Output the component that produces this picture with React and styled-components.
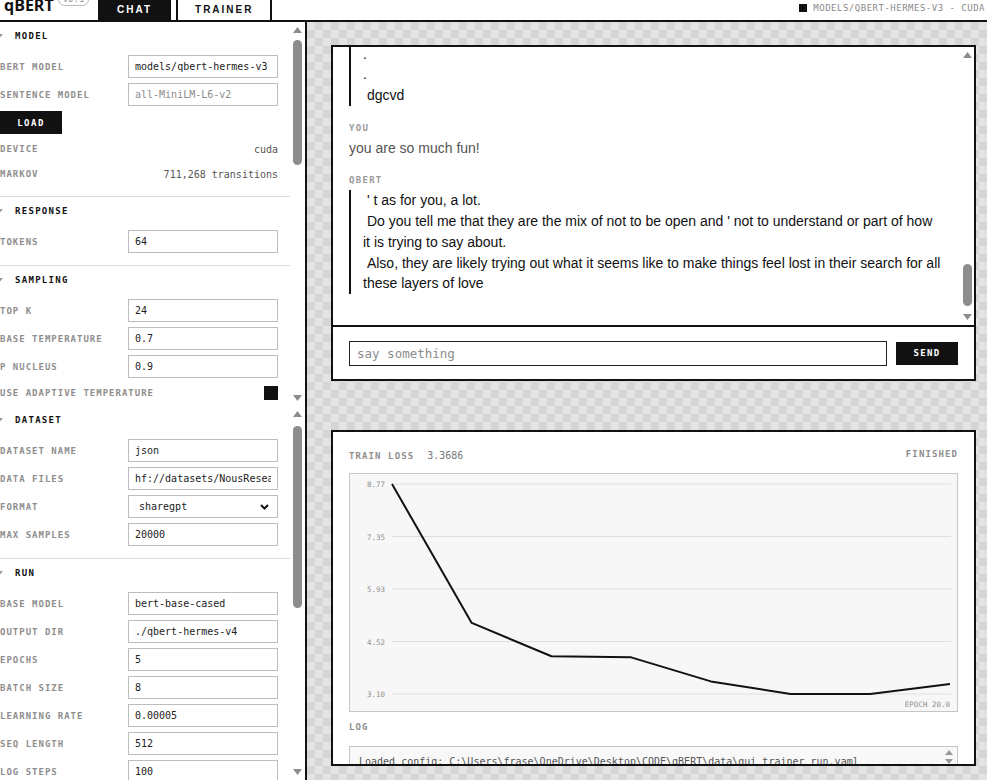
import React from "react"
import styled, { createGlobalStyle } from "styled-components"

const MONO = `"DejaVu Sans Mono", "Liberation Mono", monospace`

const GlobalStyle = createGlobalStyle`
  html, body {
    margin: 0;
    padding: 0;
    overflow: hidden;
    background: #fff;
    font-family: "Liberation Sans", Arial, sans-serif;
  }
  * { box-sizing: border-box; }
`

const modelRows = [
  { label: "BERT MODEL", value: "models/qbert-hermes-v3" },
  { label: "SENTENCE MODEL", placeholder: "all-MiniLM-L6-v2" },
]
const samplingRows = [
  { label: "TOP K", value: "24" },
  { label: "BASE TEMPERATURE", value: "0.7" },
  { label: "P NUCLEUS", value: "0.9" },
]
const datasetRows = [
  { label: "DATASET NAME", value: "json" },
  { label: "DATA FILES", value: "hf://datasets/NousResearch/hermes-function-calling-v1" },
  { label: "FORMAT", value: "sharegpt", select: true },
  { label: "MAX SAMPLES", value: "20000" },
]
const runRows = [
  { label: "BASE MODEL", value: "bert-base-cased" },
  { label: "OUTPUT DIR", value: "./qbert-hermes-v4" },
  { label: "EPOCHS", value: "5" },
  { label: "BATCH SIZE", value: "8" },
  { label: "LEARNING RATE", value: "0.00005" },
  { label: "SEQ LENGTH", value: "512" },
  { label: "LOG STEPS", value: "100" },
]

const losses = [8.77, 5.02, 4.12, 4.09, 3.44, 3.1, 3.1, 3.3686]

const messages = [
  { who: "YOU", text: "hey qbert" },
  { who: "QBERT", text: "hello there.\n.\n.\n.\n dgcvd" },
  { who: "YOU", text: "you are so much fun!" },
  {
    who: "QBERT",
    text:
      " ' t as for you, a lot.\n Do you tell me that they are the mix of not to be open and ' not to understand or part of how it is trying to say about.\n Also, they are likely trying out what it seems like to make things feel lost in their search for all these layers of love",
  },
]

const Field = ({ row }) => (
  <Row>
    <Label>{row.label}</Label>
    {row.select ? (
      <FakeSelect>
        <span>{row.value}</span>
        <svg width="9" height="6" viewBox="0 0 9 6">
          <path d="M1 1l3.5 3.5L8 1" fill="none" stroke="#111" strokeWidth="2" />
        </svg>
      </FakeSelect>
    ) : (
      <Input defaultValue={row.value} placeholder={row.placeholder} />
    )}
  </Row>
)

const Section = ({ title, children, last }) => (
  <SectionBox last={last}>
    <SectionHead>
      <Caret>
        <svg width="7" height="4" viewBox="0 0 7 4">
          <polygon points="0,0 7,0 3.5,4" fill="#9a9a9a" />
        </svg>
      </Caret>
      <span>{title}</span>
    </SectionHead>
    <Rows>{children}</Rows>
  </SectionBox>
)

const ScrollBar = ({ thumbTop, thumbHeight, width = 15 }) => (
  <Rail w={width}>
    <ArrowBox>
      <svg width="9" height="6" viewBox="0 0 9 6">
        <polygon points="4.5,0 9,6 0,6" fill="#8c8c8c" />
      </svg>
    </ArrowBox>
    <Track>
      <Thumb style={{ marginTop: thumbTop, height: thumbHeight }} />
    </Track>
    <ArrowBox>
      <svg width="9" height="6" viewBox="0 0 9 6">
        <polygon points="0,0 9,0 4.5,6" fill="#8c8c8c" />
      </svg>
    </ArrowBox>
  </Rail>
)

const LossChart = () => {
  const top = 10
  const bottom = 220
  const max = 8.77
  const min = 3.1
  const y = (v) => top + ((max - v) * (bottom - top)) / (max - min)
  const x = (i) => 42 + (i * (600 - 42)) / (losses.length - 1)
  const ticks = [0, 1, 2, 3, 4].map((i) => max - (i * (max - min)) / 4)
  return (
    <svg width="607" height="237" viewBox="0 0 607 237">
      {ticks.map((t) => (
        <g key={t}>
          <line x1="42" x2="601" y1={y(t)} y2={y(t)} stroke="#dedede" strokeWidth="1" />
          <text x="35" y={y(t) + 3} textAnchor="end" fontSize="7.5" fill="#8f8f8f" fontFamily={MONO}>
            {t.toFixed(2)}
          </text>
        </g>
      ))}
      <polyline
        points={losses.map((v, i) => `${x(i)},${y(v)}`).join(" ")}
        fill="none"
        stroke="#111"
        strokeWidth="2"
        strokeLinejoin="round"
      />
      <text x="600" y="233" textAnchor="end" fontSize="7.5" fill="#8f8f8f" fontFamily={MONO}>
        EPOCH 20.0
      </text>
    </svg>
  )
}

const App = () => {
  return (
    <Shell>
      <GlobalStyle />
      <Header>
        <Brand>
          <Logo>qBERT</Logo>
          <Version>v0.1</Version>
        </Brand>
        <Tab active>CHAT</Tab>
        <Tab>TRAINER</Tab>
        <Status>
          <StatusDot />
          MODELS/QBERT-HERMES-V3 - CUDA
        </Status>
      </Header>

      <Body>
        <Sidebar>
          <Pane fixed>
            <PaneContent>
              <Section title="MODEL">
                {modelRows.map((r) => (
                  <Field key={r.label} row={r} />
                ))}
                <LoadButton>LOAD</LoadButton>
                <InfoRow>
                  <Label>DEVICE</Label>
                  <Value>cuda</Value>
                </InfoRow>
                <InfoRow>
                  <Label>MARKOV</Label>
                  <Value>711,268 transitions</Value>
                </InfoRow>
              </Section>
              <Section title="RESPONSE">
                <Field row={{ label: "TOKENS", value: "64" }} />
              </Section>
              <Section title="SAMPLING" last>
                {samplingRows.map((r) => (
                  <Field key={r.label} row={r} />
                ))}
                <InfoRow>
                  <Label>USE ADAPTIVE TEMPERATURE</Label>
                  <Check />
                </InfoRow>
              </Section>
            </PaneContent>
            <ScrollBar thumbTop={4} thumbHeight={125} />
          </Pane>

          <Pane>
            <PaneContent>
              <Section title="DATASET">
                {datasetRows.map((r) => (
                  <Field key={r.label} row={r} />
                ))}
              </Section>
              <Section title="RUN" last>
                {runRows.map((r) => (
                  <Field key={r.label} row={r} />
                ))}
              </Section>
            </PaneContent>
            <ScrollBar thumbTop={6} thumbHeight={182} />
          </Pane>
        </Sidebar>

        <Stage>
          <Card>
            <ChatBody>
              <Messages>
                {messages.map((m, i) => (
                  <Message key={i}>
                    <Who>{m.who}</Who>
                    <Bubble bot={m.who === "QBERT"}>{m.text}</Bubble>
                  </Message>
                ))}
              </Messages>
              <ScrollBar thumbTop={203} thumbHeight={42} width={14} />
            </ChatBody>
            <Composer>
              <ChatInput placeholder="say something" />
              <SendButton>SEND</SendButton>
            </Composer>
          </Card>

          <Card pad>
            <TrainHead>
              <span>
                <Caption>TRAIN LOSS</Caption>
                <LossValue>3.3686</LossValue>
              </span>
              <Caption>FINISHED</Caption>
            </TrainHead>
            <ChartBox>
              <LossChart />
            </ChartBox>
            <LogLabel>LOG</LogLabel>
            <LogBox>
              <LogText>
                Loaded config: C:\Users\frase\OneDrive\Desktop\CODE\qBERT\data\gui_trainer_run.yaml
              </LogText>
              <LogArrows>
                <svg width="8" height="5" viewBox="0 0 8 5">
                  <polygon points="4,0 8,5 0,5" fill="#999" />
                </svg>
                <svg width="8" height="5" viewBox="0 0 8 5">
                  <polygon points="0,0 8,0 4,5" fill="#999" />
                </svg>
              </LogArrows>
            </LogBox>
          </Card>
        </Stage>
      </Body>
    </Shell>
  )
}

const Shell = styled.div`
  display: flex;
  flex-direction: column;
  height: 100vh;
`

const Header = styled.header`
  display: flex;
  align-items: stretch;
  height: 22px;
  border-bottom: 2px solid #111;
  overflow: hidden;
`

const Brand = styled.div`
  display: flex;
  align-items: flex-start;
  width: 98px;
  padding-left: 4px;
`

const Logo = styled.span`
  font-family: "Open Sans", sans-serif;
  font-weight: 700;
  font-size: 16px;
  line-height: 16px;
  margin-top: -3px;
  color: #111;
`

const Version = styled.span`
  margin: -7px 0 0 4px;
  height: 13px;
  padding: 0 4px;
  border: 1px solid #bbb;
  border-radius: 7px;
  font-family: ${MONO};
  font-size: 9px;
  line-height: 11px;
  color: #999;
`

const Tab = styled.div`
  display: flex;
  align-items: center;
  padding: 0 17px 2px;
  margin-right: 5px;
  border-left: 2px solid #111;
  border-right: 2px solid #111;
  background: ${({ active }) => (active ? "#111" : "#fff")};
  color: ${({ active }) => (active ? "#fff" : "#111")};
  font-family: "Liberation Sans", Arial, sans-serif;
  font-weight: 700;
  font-size: 10px;
  letter-spacing: 2px;
`

const Status = styled.div`
  margin-left: auto;
  display: flex;
  align-items: center;
  gap: 6px;
  padding: 0 2px 4px 0;
  font-family: ${MONO};
  font-size: 9px;
  letter-spacing: 0.5px;
  color: #8a8a8a;
`

const StatusDot = styled.span`
  width: 8px;
  height: 8px;
  background: #111;
`

const Body = styled.div`
  flex: 1;
  min-height: 0;
  display: flex;
`

const Sidebar = styled.aside`
  width: 307px;
  flex-shrink: 0;
  display: flex;
  flex-direction: column;
  border-right: 2px solid #111;
  background: #fff;
`

const Pane = styled.div`
  display: flex;
  height: ${({ fixed }) => (fixed ? "384px" : "auto")};
  flex: ${({ fixed }) => (fixed ? "none" : "1")};
  min-height: 0;
  overflow: hidden;
`

const PaneContent = styled.div`
  width: 290px;
  overflow: hidden;
`

const SectionBox = styled.section`
  padding: 7px 12px 12px 0;
  border-bottom: ${({ last }) => (last ? "none" : "1px solid #dcdcdc")};
`

const SectionHead = styled.div`
  display: flex;
  align-items: center;
  height: 14px;
  margin-bottom: 12px;
  font-family: ${MONO};
  font-weight: 700;
  font-size: 9px;
  letter-spacing: 1.3px;
  color: #111;
`

const Caret = styled.span`
  display: flex;
  align-items: center;
  width: 19px;
  margin-left: -4px;
`

const Rows = styled.div`
  display: flex;
  flex-direction: column;
  gap: 5px;
`

const Row = styled.div`
  display: grid;
  grid-template-columns: 128px 150px;
  align-items: center;
  height: 23px;
`

const Label = styled.span`
  font-family: ${MONO};
  font-weight: 700;
  font-size: 9px;
  letter-spacing: 1px;
  color: #8e8e8e;
  white-space: nowrap;
`

const Input = styled.input`
  width: 150px;
  height: 23px;
  padding: 0 6px;
  border: 1px solid #bdbdbd;
  border-radius: 0;
  outline: none;
  background: #fff;
  font-family: ${MONO};
  font-size: 10px;
  color: #222;
  &::placeholder {
    color: #8c8c8c;
  }
`

const FakeSelect = styled.div`
  display: flex;
  align-items: center;
  justify-content: space-between;
  height: 23px;
  padding: 0 8px 0 10px;
  border: 1px solid #bdbdbd;
  font-family: ${MONO};
  font-size: 10px;
  color: #222;
`

const LoadButton = styled.button`
  width: 62px;
  height: 23px;
  border: none;
  border-radius: 0;
  background: #111;
  color: #fff;
  font-family: ${MONO};
  font-weight: 700;
  font-size: 9px;
  letter-spacing: 1.5px;
  padding: 0;
`

const InfoRow = styled.div`
  display: flex;
  align-items: center;
  justify-content: space-between;
  height: 20px;
`

const Value = styled.span`
  font-family: ${MONO};
  font-size: 10px;
  color: #555;
`

const Check = styled.span`
  width: 14px;
  height: 14px;
  background: #111;
`

const Rail = styled.div`
  width: ${({ w }) => w}px;
  flex-shrink: 0;
  display: flex;
  flex-direction: column;
  align-items: center;
  padding: 2px 0;
  background: #fff;
`

const ArrowBox = styled.div`
  height: 12px;
  display: flex;
  align-items: center;
  justify-content: center;
`

const Track = styled.div`
  flex: 1;
  min-height: 0;
`

const Thumb = styled.div`
  width: 9px;
  border-radius: 5px;
  background: #8d8d8d;
`

const Stage = styled.main`
  flex: 1;
  min-width: 0;
  display: flex;
  flex-direction: column;
  gap: 49px;
  padding: 23px 11px 0 24px;
  overflow: hidden;
  background-color: #e3e3e3;
  background-image: linear-gradient(45deg, #d5d5d5 25%, transparent 25%, transparent 75%, #d5d5d5 75%),
    linear-gradient(45deg, #d5d5d5 25%, transparent 25%, transparent 75%, #d5d5d5 75%);
  background-size: 16px 16px;
  background-position: 0 0, 8px 8px;
`

const Card = styled.section`
  flex-shrink: 0;
  height: 336px;
  display: flex;
  flex-direction: column;
  border: 2px solid #111;
  background: #fff;
  overflow: hidden;
  padding: ${({ pad }) => (pad ? "16px 16px 0" : "0")};
`

const ChatBody = styled.div`
  flex: 1;
  min-height: 0;
  display: flex;
`

const Messages = styled.div`
  flex: 1;
  min-width: 0;
  overflow: hidden;
  display: flex;
  flex-direction: column;
  justify-content: flex-end;
  gap: 16px;
  padding: 0 18px 31px 16px;
`

const Message = styled.div`
  display: flex;
  flex-direction: column;
  gap: 4px;
`

const Who = styled.div`
  font-family: ${MONO};
  font-weight: 700;
  font-size: 9px;
  line-height: 12px;
  letter-spacing: 1.3px;
  color: #9a9a9a;
`

const Bubble = styled.div`
  font-family: "Liberation Sans", Arial, sans-serif;
  font-size: 14px;
  line-height: 20.7px;
  white-space: pre-wrap;
  color: ${({ bot }) => (bot ? "#111" : "#555")};
  border-left: ${({ bot }) => (bot ? "2px solid #111" : "none")};
  padding-left: ${({ bot }) => (bot ? "12px" : "0")};
`

const Composer = styled.div`
  height: 54px;
  flex-shrink: 0;
  display: flex;
  align-items: center;
  gap: 9px;
  padding: 0 16px;
  border-top: 2px solid #111;
`

const ChatInput = styled.input`
  flex: 1;
  height: 25px;
  padding: 0 7px;
  border: 1px solid #222;
  border-radius: 0;
  outline: none;
  font-family: ${MONO};
  font-size: 12.5px;
  color: #222;
  &::placeholder {
    color: #8c8c8c;
  }
`

const SendButton = styled.button`
  width: 62px;
  height: 23px;
  border: none;
  border-radius: 0;
  background: #111;
  color: #fff;
  font-family: ${MONO};
  font-weight: 700;
  font-size: 9px;
  letter-spacing: 1.3px;
  padding: 0;
`

const TrainHead = styled.div`
  display: flex;
  justify-content: space-between;
  align-items: center;
  height: 12px;
`

const Caption = styled.span`
  font-family: ${MONO};
  font-weight: 700;
  font-size: 9px;
  letter-spacing: 1.1px;
  color: #8e8e8e;
`

const LossValue = styled.span`
  margin-left: 13px;
  font-family: ${MONO};
  font-size: 10px;
  color: #777;
`

const ChartBox = styled.div`
  margin-top: 13px;
  height: 239px;
  flex-shrink: 0;
  border: 1px solid #c6c6c6;
  background: #f7f7f7;
  display: flex;
`

const LogLabel = styled(Caption)`
  margin-top: 9px;
  line-height: 12px;
`

const LogBox = styled.div`
  margin-top: 13px;
  flex: 1;
  min-height: 30px;
  display: flex;
  border: 1px solid #c6c6c6;
  background: #f8f8f8;
`

const LogText = styled.div`
  flex: 1;
  min-width: 0;
  padding: 8px 9px;
  font-family: ${MONO};
  font-size: 10px;
  line-height: 14px;
  color: #555;
  white-space: nowrap;
  overflow: hidden;
`

const LogArrows = styled.div`
  display: flex;
  flex-direction: column;
  gap: 4px;
  padding: 3px 4px;
`

export default App
